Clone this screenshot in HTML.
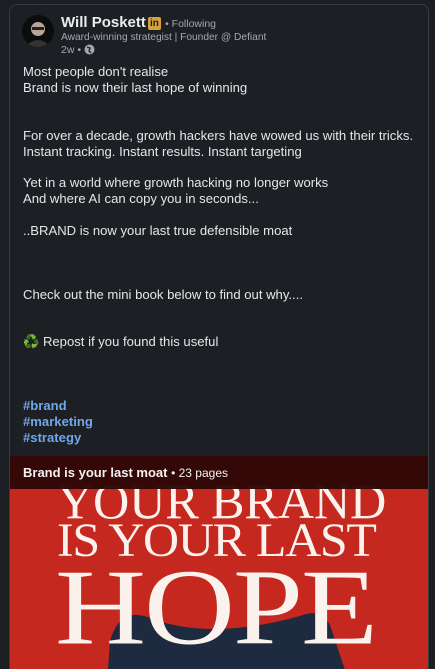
<!DOCTYPE html>
<html><head><meta charset="utf-8"><style>
html,body{margin:0;width:435px;height:669px;overflow:hidden;}
body{background:#1b1e22;font-family:"Liberation Sans",sans-serif;position:relative}
.card{position:absolute;left:9px;top:4px;width:418px;height:665px;background:#1c2024;border:1px solid #383c41;border-bottom:none;border-radius:8px 8px 0 0;overflow:hidden;}
.av{position:absolute;left:12px;top:10px;width:32px;height:32px;border-radius:50%;background:#0c0c0c;overflow:hidden}
.name{position:absolute;left:51px;top:9px;font-size:15px;font-weight:bold;color:#ececec}
.in{display:inline-block;background:#d4a23a;color:#1c2024;font-size:10px;width:13px;height:13px;line-height:13px;text-align:center;border-radius:2px;vertical-align:1px;margin-left:2px}
.fol{font-weight:normal;font-size:10.5px;color:#a5a8ab}
.head{position:absolute;left:51px;top:27px;font-size:10.2px;color:#a5a8ab}
.tm{position:absolute;left:51px;top:39px;font-size:10.5px;color:#a5a8ab}
.body{position:absolute;left:13px;top:59px;font-size:13.1px;line-height:15.9px;color:#e6e6e6;white-space:pre}
.tag{color:#71a7e8;font-weight:bold}
.img{position:absolute;left:0;top:451px;width:418px;height:214px;background:#c5281f;overflow:hidden}
.bar{position:absolute;left:0;top:451px;width:418px;height:33px;background:rgba(40,6,4,.93);color:#f2f2f2;font-size:13px;font-weight:bold;line-height:33px;padding-left:13px;z-index:2}
.bar span{font-weight:normal;font-size:12px}
.t{position:absolute;font-family:"Liberation Serif",serif;color:#fbf2ee;white-space:nowrap;line-height:1}
</style></head><body>
<div class="card">
<div class="av"><svg width="32" height="32"><circle cx="16" cy="14" r="7" fill="#b9a597"/><rect x="10" y="12" width="12" height="3" fill="#222"/><path d="M3 32 Q16 18 29 32Z" fill="#333"/></svg></div>
<div class="name">Will Poskett<span class="in">in</span> <span class="fol">• Following</span></div>
<div class="head">Award-winning strategist | Founder @ Defiant</div>
<div class="tm">2w • <svg width="11" height="11" style="vertical-align:-2px"><circle cx="5.5" cy="5.5" r="5" fill="#a5a8ab"/><path d="M3 3 L6 4 L5 7 L7 9" stroke="#1c2024" stroke-width="1.3" fill="none"/></svg></div>
<div class="body">Most people don't realise
Brand is now their last hope of winning


For over a decade, growth hackers have wowed us with their tricks.
Instant tracking. Instant results. Instant targeting

Yet in a world where growth hacking no longer works
And where AI can copy you in seconds...

..BRAND is now your last true defensible moat



Check out the mini book below to find out why....


♻️ Repost if you found this useful



<span class="tag">#brand</span>
<span class="tag">#marketing</span>
<span class="tag">#strategy</span></div>
<div class="bar">Brand is your last moat <span>• 23 pages</span></div>
<div class="img">
<svg style="position:absolute;left:0;top:0" width="418" height="214"><path d="M98 214 L100 185 Q110 150 140 162 Q200 185 290 160 Q315 150 322 175 L335 214Z" fill="#1e2a40"/></svg>
<div class="t" style="left:47px;top:20px;font-size:50px;color:rgba(251,242,238,.55)">YOUR BRAND</div>
<div class="t" style="left:47px;top:20px;font-size:50px;clip-path:inset(13px 0 0 0)">YOUR BRAND</div>
<div class="t" style="left:47px;top:60px;font-size:50px;letter-spacing:-1.3px;transform:scaleY(0.95);transform-origin:top left">IS YOUR LAST</div>
<div class="t" style="left:45px;top:98px;font-size:126px;letter-spacing:-2px;transform:scaleY(0.86);transform-origin:top left">HOPE</div>
</div>
</div>
</body></html>
